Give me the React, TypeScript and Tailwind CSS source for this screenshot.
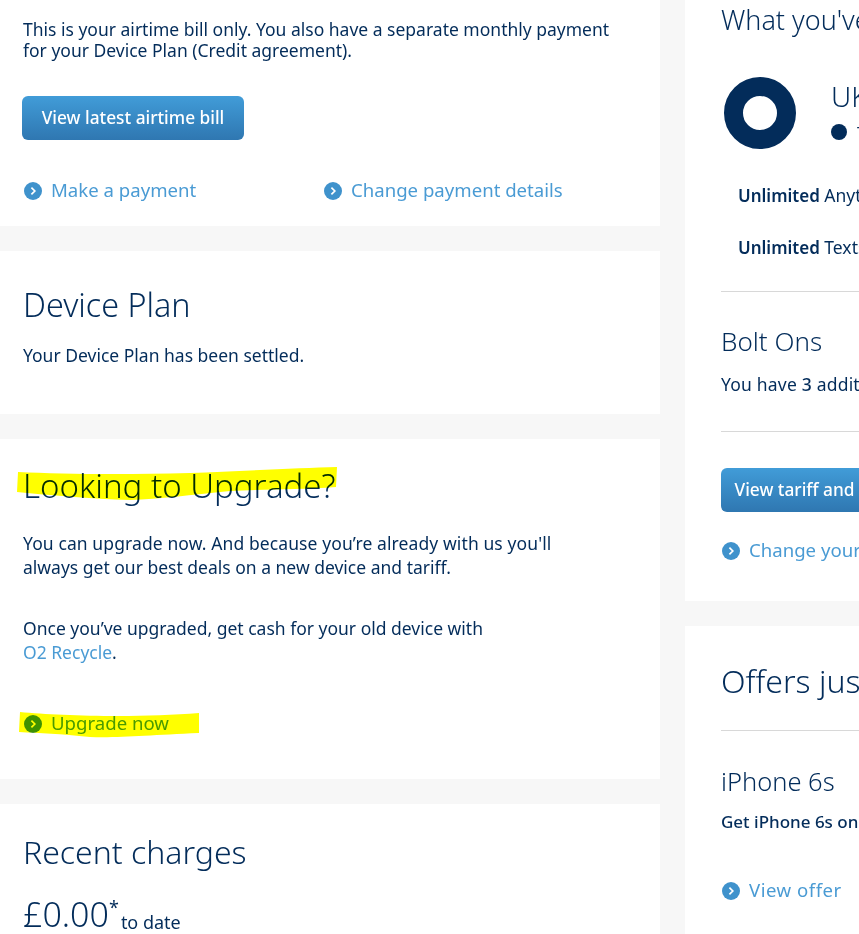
const font = { fontFamily: '"Noto Sans", "Open Sans", sans-serif' };

function Chevron({ className }: { className: string }) {
  return (
    <svg width="18" height="18" viewBox="0 0 18 18" className={className}>
      <circle cx="9" cy="9" r="9" fill="currentColor" />
      <path d="M7.4 5.6 10.8 9l-3.4 3.4" fill="none" stroke="#fff" strokeWidth="1.7" />
    </svg>
  );
}

function LinkRow({ label, className = "" }: { label: string; className?: string }) {
  return (
    <a className={`flex items-center gap-[9px] text-[18.6px] leading-6 whitespace-nowrap text-[#4a9bd4] ${className}`}>
      <Chevron className="mt-[2px] ml-px shrink-0 text-[#3f92cc]" />
      {label}
    </a>
  );
}

function BlueButton({ label, className = "" }: { label: string; className?: string }) {
  return (
    <button className={`h-11 rounded-md bg-gradient-to-b from-[#419cd8] to-[#2f77b1] pb-px text-[17.3px] font-medium whitespace-nowrap text-white ${className}`}>
      {label}
    </button>
  );
}

export default function App() {
  return (
    <div style={font} className="relative flex h-[934px] w-[859px] gap-[25px] overflow-hidden bg-[#f7f7f7] text-[17.5px] text-[#032c5a]">
      <div className="flex w-[660px] shrink-0 flex-col gap-[25px]">
        <section className="h-[226px] shrink-0 bg-white pt-[19px] pl-[23px]">
          <p className="w-[600px] leading-[21px]">
            This is your airtime bill only. You also have a separate monthly payment for your Device Plan (Credit agreement).
          </p>
          <BlueButton label="View latest airtime bill" className="mt-[35px] -ml-px w-[222px]" />
          <div className="mt-[38px] flex">
            <LinkRow label="Make a payment" className="w-[300px]" />
            <LinkRow label="Change payment details" />
          </div>
        </section>
        <section className="h-[163px] shrink-0 bg-white pt-[32px] pl-[23px]">
          <h2 className="text-[32.3px] leading-[42px] font-light">Device Plan</h2>
          <p className="mt-[18px] leading-6">Your Device Plan has been settled.</p>
        </section>
        <section className="h-[340px] shrink-0 bg-white pt-[26px] pl-[23px]">
          <h2 className="text-[33px] leading-[42px] font-light">Looking to Upgrade?</h2>
          <p className="mt-[24px] w-[560px] leading-6">
            <span className="tracking-[0.1px]">You can upgrade now. And because you’re already with us you'll</span>
            <br />
            always get our best deals on a new device and tariff.
          </p>
          <p className="mt-[37px] w-[560px] leading-6">
            Once you’ve upgraded, get cash for your old device with <br />
            <a className="text-[#4a9bd4]">O2 Recycle</a>.
          </p>
          <LinkRow label="Upgrade now" className="mt-[47px]" />
        </section>
        <section className="flex-1 bg-white pt-[27px] pl-[23px]">
          <h2 className="text-[32px] leading-[42px] font-light">Recent charges</h2>
          <p className="mt-[19px] flex items-start leading-none whitespace-nowrap">
            <span className="text-[34px] leading-[44px] font-light">£0.00</span>
            <span className="mt-[6px] text-[18px]">*</span>
            <span className="mt-[21px] ml-[2px] text-[18px]">to date</span>
          </p>
        </section>
      </div>

      <div className="flex min-w-0 flex-1 flex-col gap-[25px]">
        <section className="h-[601px] shrink-0 bg-white pl-[36px]">
          <h2 className="pt-px text-[27px] leading-[38px] font-light whitespace-nowrap">What you've got</h2>
          <div className="mt-[38px] flex">
            <div className="ml-[3px] box-border h-[72px] w-[72px] shrink-0 rounded-full border-[19px] border-[#032c5a]"></div>
            <div className="ml-[35px] whitespace-nowrap">
              <div className="text-[28px] leading-[38px] font-light">UK tariff</div>
              <div className="mt-[6px] flex items-center gap-[10px]">
                <span className="h-4 w-4 shrink-0 rounded-full bg-[#032c5a]"></span>
                <span className="text-[14px]">Tariff</span>
              </div>
            </div>
          </div>
          <p className="mt-[34px] ml-[17px] leading-6 whitespace-nowrap"><b className="text-[17px] font-semibold">Unlimited</b> Anytime minutes</p>
          <p className="mt-[27px] ml-[17px] leading-6 whitespace-nowrap"><b className="text-[17px] font-semibold">Unlimited</b> Texts</p>
          <hr className="mt-[31px] border-[#d8d8d8]" />
          <h3 className="mt-[31px] text-[26px] leading-9 font-light">Bolt Ons</h3>
          <p className="mt-[13px] leading-6 tracking-[0.2px] whitespace-nowrap">You have <span className="font-medium">3</span> additional Bolt Ons</p>
          <hr className="mt-[35px] border-[#d8d8d8]" />
          <BlueButton label="View tariff and Bolt Ons" className="mt-[36px] w-[222px]" />
          <LinkRow label="Change your tariff" className="mt-[26px]" />
        </section>
        <section className="flex-1 bg-white pl-[36px]">
          <h2 className="pt-[34px] text-[32px] leading-[42px] font-light whitespace-nowrap">Offers just for you</h2>
          <hr className="mt-[28px] border-[#d8d8d8]" />
          <h3 className="mt-[32px] text-[25.5px] leading-9 font-light whitespace-nowrap">iPhone 6s</h3>
          <p className="mt-[11px] text-[17px] leading-6 font-medium whitespace-nowrap">Get iPhone 6s on</p>
          <LinkRow label="View offer" className="mt-[44px] tracking-[0.5px]" />
        </section>
      </div>

      <svg className="pointer-events-none absolute inset-0 mix-blend-multiply" width="859" height="934" viewBox="0 0 859 934">
        <path fill="#ffff00" d="M18 472 C60 474 120 475 190 473 C240 471 300 468 337 467 L336 487 C300 490 260 489 230 491 C190 495 160 499 130 500 C90 499 50 495 17 492 Z" />
        <path fill="#ffff00" d="M20 712 C60 716 140 718 199 713 L199 733 C150 735 120 738 90 737 C60 734 40 733 19 732 Z" />
      </svg>
    </div>
  );
}
